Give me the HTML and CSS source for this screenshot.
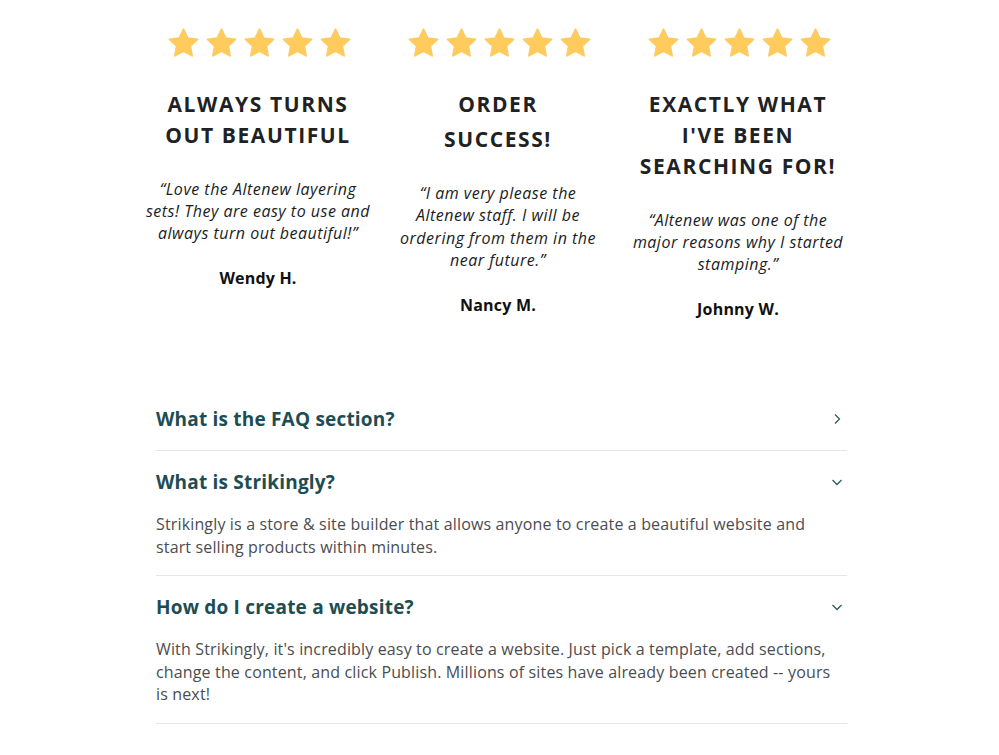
FILE: index.html
```html
<!DOCTYPE html>
<html lang="en">
<head>
<meta charset="utf-8">
<title>Testimonials and FAQ</title>
<link rel="stylesheet" href="styles.css">
</head>
<body>
<svg width="0" height="0" class="defs" aria-hidden="true">
  <defs>
    <symbol id="star" viewBox="0 0 24 24">
      <path d="M12 1.6l3.1 6.5 7.1 0.9-5.2 4.9 1.3 7.1L12 17.6 5.7 21l1.3-7.1L1.8 9l7.1-0.9z" fill="currentColor" stroke="currentColor" stroke-width="1.2" stroke-linejoin="round"/>
    </symbol>
  </defs>
</svg>
<section class="testimonials">
  <div class="col">
    <div class="stars">
      <svg class="star"><use href="#star"/></svg><svg class="star"><use href="#star"/></svg><svg class="star"><use href="#star"/></svg><svg class="star"><use href="#star"/></svg><svg class="star"><use href="#star"/></svg>
    </div>
    <h2 class="title">ALWAYS TURNS<br>OUT BEAUTIFUL</h2>
    <p class="quote">“Love the Altenew layering<br>sets! They are easy to use and<br>always turn out beautiful!”</p>
    <p class="name">Wendy H.</p>
  </div>
  <div class="col">
    <div class="stars">
      <svg class="star"><use href="#star"/></svg><svg class="star"><use href="#star"/></svg><svg class="star"><use href="#star"/></svg><svg class="star"><use href="#star"/></svg><svg class="star"><use href="#star"/></svg>
    </div>
    <h2 class="title">ORDER<span class="title-line">SUCCESS!</span></h2>
    <p class="quote quote-loose">“I am very please the<br>Altenew staff. I will be<br>ordering from them in the<br>near future.”</p>
    <p class="name">Nancy M.</p>
  </div>
  <div class="col">
    <div class="stars">
      <svg class="star"><use href="#star"/></svg><svg class="star"><use href="#star"/></svg><svg class="star"><use href="#star"/></svg><svg class="star"><use href="#star"/></svg><svg class="star"><use href="#star"/></svg>
    </div>
    <h2 class="title">EXACTLY WHAT<br>I'VE BEEN<br>SEARCHING FOR!</h2>
    <p class="quote">“Altenew was one of the<br>major reasons why I started<br>stamping.”</p>
    <p class="name">Johnny W.</p>
  </div>
</section>

<section class="faq">
  <div class="faq-item faq-item-closed">
    <div class="faq-q">
      <span>What is the FAQ section?</span>
      <svg class="chev" viewBox="0 0 12 12"><path d="M4 1.5l4.5 4.5L4 10.5"/></svg>
    </div>
  </div>
  <div class="faq-item">
    <div class="faq-q">
      <span>What is Strikingly?</span>
      <svg class="chev" viewBox="0 0 12 12"><path d="M1.5 4l4.5 4.5L10.5 4"/></svg>
    </div>
    <p class="faq-a">Strikingly is a store &amp; site builder that allows anyone to create a beautiful website and start selling products within minutes.</p>
  </div>
  <div class="faq-item">
    <div class="faq-q">
      <span>How do I create a website?</span>
      <svg class="chev" viewBox="0 0 12 12"><path d="M1.5 4l4.5 4.5L10.5 4"/></svg>
    </div>
    <p class="faq-a">With Strikingly, it's incredibly easy to create a website. Just pick a template, add sections, change the content, and click Publish. Millions of sites have already been created -- yours is next!</p>
  </div>
</section>
</body>
</html>
```

FILE: styles.css
```css
html, body {
  margin: 0;
  padding: 0;
  background: #ffffff;
}
body {
  font-family: "Open Sans", "Liberation Sans", sans-serif;
  color: #1d1f21;
}
.defs {
  position: absolute;
  width: 0;
  height: 0;
}
.testimonials {
  display: grid;
  grid-template-columns: repeat(3, 240px);
  margin-left: 138px;
  padding-top: 27px;
}
.col {
  display: flex;
  flex-direction: column;
  align-items: center;
  text-align: center;
}
.stars {
  display: flex;
  gap: 5px;
  height: 33px;
  margin-left: 2px;
}
.star {
  width: 33px;
  height: 33px;
  color: #ffcb5c;
}
.title {
  margin: 29px 0 0;
  font-size: 21px;
  line-height: 31px;
  font-weight: 700;
  letter-spacing: 1.6px;
  color: #1f2224;
  white-space: nowrap;
}
.title-line {
  display: block;
  margin-top: 4px;
}
.quote {
  margin: 27px 0 0;
  font-size: 16px;
  line-height: 22px;
  font-style: italic;
  letter-spacing: 0.5px;
  color: #1a1c1e;
  white-space: nowrap;
}
.quote-loose {
  line-height: 22.3px;
}
.name {
  margin: 23px 0 0;
  font-size: 16px;
  line-height: 22px;
  font-weight: 700;
  letter-spacing: 0.2px;
  color: #111;
}
.faq {
  width: 691px;
  margin: 68px 0 0 156px;
}
.faq-item {
  padding: 19px 0 17px;
  border-bottom: 1px solid #e6e6e6;
}
.faq-item-closed {
  padding-bottom: 19px;
}
.faq-q {
  display: flex;
  align-items: center;
  justify-content: space-between;
  font-size: 19px;
  line-height: 24px;
  font-weight: 700;
  letter-spacing: 0.2px;
  color: #1d4d53;
}
.chev {
  width: 12px;
  height: 12px;
  margin-right: 4px;
  fill: none;
  stroke: #2c5a60;
  stroke-width: 1.3;
}
.faq-a {
  margin: 19px 0 0;
  padding-right: 10px;
  font-size: 16px;
  line-height: 22.5px;
  letter-spacing: 0.15px;
  color: #4a4d50;
}
```
